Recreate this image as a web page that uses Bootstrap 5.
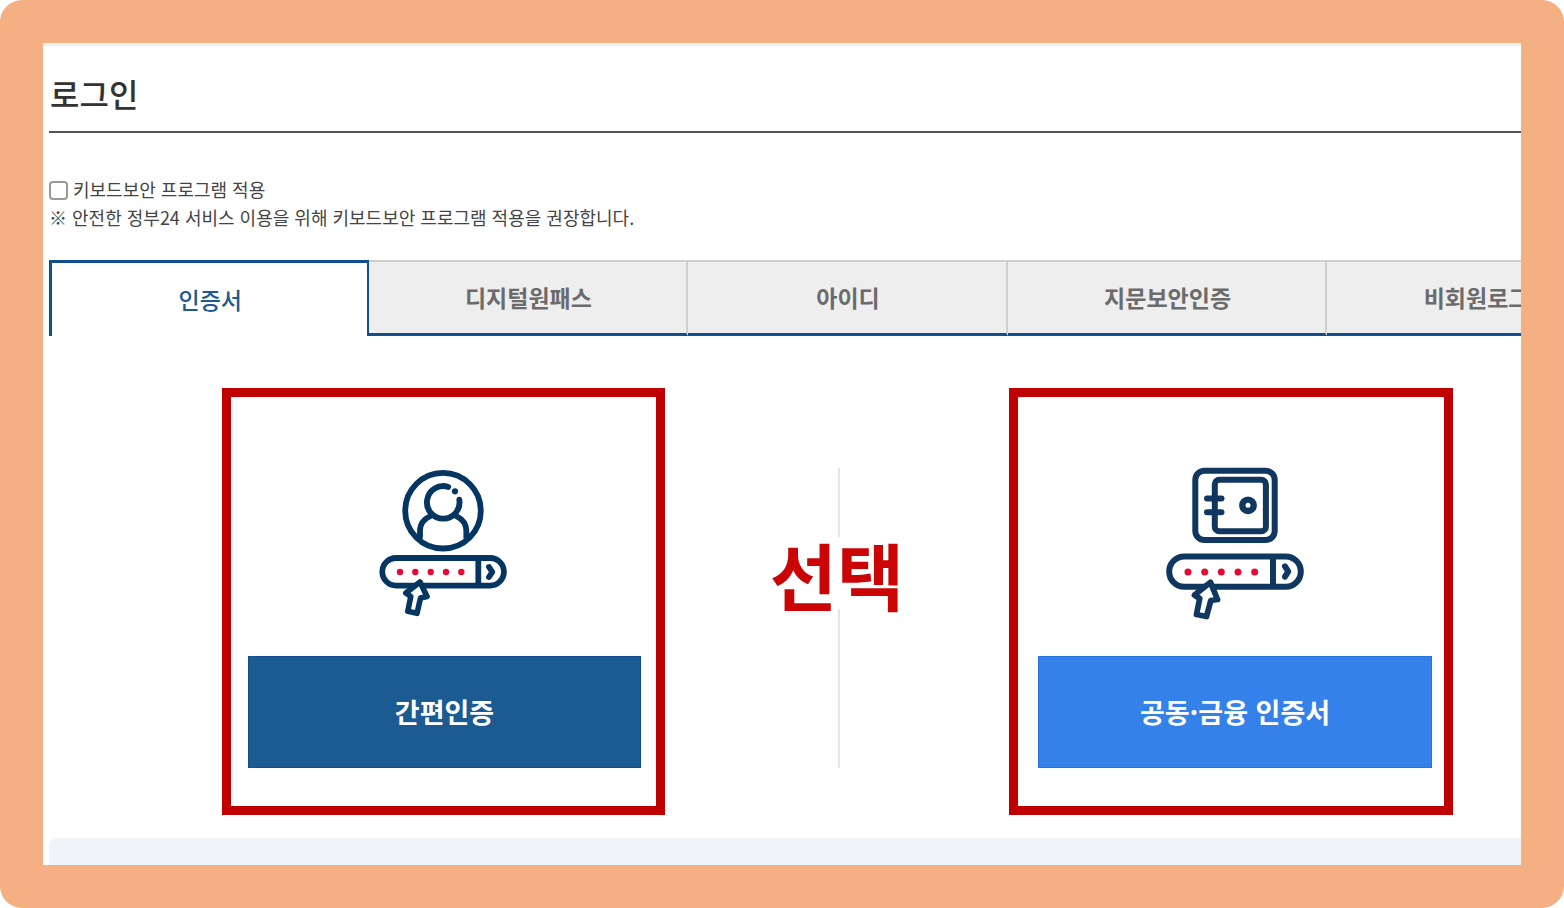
<!DOCTYPE html>
<html lang="ko">
<head>
<meta charset="utf-8">
<meta name="viewport" content="width=device-width, initial-scale=1">
<title>로그인</title>
<link href="https://cdn.jsdelivr.net/npm/bootstrap@5.3.0/dist/css/bootstrap.min.css" rel="stylesheet">
<style>
  body { font-family: "Noto Sans CJK KR", sans-serif; color: #333; background: #fff; }
  .frame { background: #f4b083; border-radius: 22px; padding: 43px; }
  .sheet { background: #fff; border-top: 3px solid #efefef; padding-left: 6px; }
  .page-title { font-size: 32px; line-height: 40px; font-weight: 500; padding: 27px 1px 18px; border-bottom: 2px solid #555; }
  .notice { font-size: 18px; line-height: 28px; color: #444; padding: 42px 0 29px; }
  .notice .form-check-input { width: 19px; height: 19px; margin: 3px 5px 0 0; border: 2px solid #999; border-radius: 4px; }
  /* The tab strip runs past the right edge and is cut off by the sheet */
  .wide { width: calc(100% + 126px); }
  .auth-tabs { border: 0; }
  .auth-tabs .nav-item { flex: 1 1 0; }
  .auth-tabs .nav-link { width: 100%; height: 76px; margin: 0; padding: 8px 14px 10px 16px; border-radius: 0; font-size: 23px; line-height: 34px; font-weight: 700; color: #6b6b6b; background: #eee;
    border: 0 solid #cfcfcf; border-top-width: 2px; border-right-width: 2px; border-bottom: 3px solid #0f4f8b; }
  .auth-tabs .nav-link.active { color: #1c5a92; background: #fff; font-weight: 500; border: 3px solid #0f4f8b; border-right-width: 2px; border-bottom: 0; }
  .choices { padding: 52px 21px 23px 0; }
  .choice { width: 443px; border: 9px solid #c00000; padding: 58px 15px 38px 17px; }
  .choice.cert { width: 444px; padding-left: 20px; padding-right: 12px; }
  .choice svg { width: 160px; height: 175px; margin-bottom: 26px; }
  .choice .btn { height: 112px; border-radius: 0; font-size: 27px; font-weight: 700; color: #fff; background: #1c5a92; border: 1px solid #0f4f8b; }
  .choice.cert .btn { background: #3482e9; border-color: #2474e0; }
  .middle { width: 344px; padding-top: 80px; justify-items: center; align-items: start; }
  .middle > * { grid-area: 1 / 1; }
  .rule { width: 2px; height: 300px; background: #e5e5e5; }
  .pick { font-size: 73px; line-height: 80px; margin-top: 65px; font-weight: 700; color: #cb0505; background: linear-gradient(#fff, #fff) center / 12px 72px no-repeat; }
  .panel { min-height: 27px; background: #eff4f9; border-top-left-radius: 8px; }
</style>
</head>
<body>
<div class="frame min-vh-100 d-flex flex-column">
  <main class="sheet flex-grow-1 d-flex flex-column overflow-hidden">
    <h1 class="page-title m-0">로그인</h1>

    <div class="notice">
      <div class="d-flex align-items-center">
        <input class="form-check-input" type="checkbox" id="keyboardSecurity">
        <label for="keyboardSecurity">키보드보안 프로그램 적용</label>
      </div>
      <p class="m-0">※ 안전한 정부24 서비스 이용을 위해 키보드보안 프로그램 적용을 권장합니다.</p>
    </div>

    <div class="wide">
      <ul class="nav nav-tabs auth-tabs flex-nowrap" role="tablist">
        <li class="nav-item" role="presentation"><button type="button" class="nav-link active" role="tab" aria-selected="true">인증서</button></li>
        <li class="nav-item" role="presentation"><button type="button" class="nav-link" role="tab" aria-selected="false">디지털원패스</button></li>
        <li class="nav-item" role="presentation"><button type="button" class="nav-link" role="tab" aria-selected="false">아이디</button></li>
        <li class="nav-item" role="presentation"><button type="button" class="nav-link" role="tab" aria-selected="false">지문보안인증</button></li>
        <li class="nav-item" role="presentation"><button type="button" class="nav-link" role="tab" aria-selected="false">비회원로그인</button></li>
      </ul>

      <div class="choices d-flex justify-content-center">
        <section class="choice d-flex flex-column align-items-center">
          <svg viewBox="365 455 160 175" fill="none" stroke="#053561" stroke-width="5.8" stroke-linecap="round" stroke-linejoin="round" aria-hidden="true">
            <circle cx="443" cy="510.7" r="37.8"/>
            <path d="M448.3 486.9A16.3 16.3 0 1 0 459.3 499.7"/>
            <path d="M420 537V530Q420.5 521 429.500 516.500M466.300 537V530Q465.800 521 457 516.500"/>
            <circle cx="455" cy="491.300" r="3.100" fill="#053561" stroke="none"/>
            <rect x="382.300" y="558" width="121.600" height="27.600" rx="13.800"/>
            <path d="M478.300 558V585.600" stroke-linecap="butt"/>
            <path d="M489 567L492.300 572L489 577"/>
            <g fill="#e60a32" stroke="none"><circle cx="400" cy="572" r="3.200"/><circle cx="415.300" cy="572" r="3.200"/><circle cx="430.700" cy="572" r="3.200"/><circle cx="446" cy="572" r="3.200"/><circle cx="461.300" cy="572" r="3.200"/></g>
            <path d="M420 582L427 596.500L420.500 598L417 613.300L407.800 611.300L410.800 596.500L405.800 593Z" fill="#fff" stroke-width="5.600"/>
          </svg>
          <button type="button" class="btn w-100">간편인증</button>
        </section>

        <div class="middle d-grid">
          <div class="rule ms-1"></div>
          <span class="pick text-nowrap">선택</span>
        </div>

        <section class="choice cert d-flex flex-column align-items-center">
          <svg viewBox="1155 455 160 175" fill="none" stroke="#10375f" stroke-width="6" stroke-linecap="round" stroke-linejoin="round" aria-hidden="true">
            <rect x="1195.300" y="470.700" width="79.400" height="69.400" rx="9"/>
            <rect x="1214.800" y="479.800" width="51.100" height="51.400" rx="4.500"/>
            <path d="M1207 498.500H1221.500M1207 512.200H1221.500"/>
            <circle cx="1248" cy="505.300" r="5.700" stroke-width="6.400"/>
            <rect x="1169.200" y="556.500" width="131.600" height="30.300" rx="15.100"/>
            <path d="M1273 557V587" stroke-linecap="butt"/>
            <path d="M1285 566.300L1288.300 571.500L1285 576.700"/>
            <g fill="#e60a32" stroke="none"><circle cx="1188" cy="572" r="3.500"/><circle cx="1204.700" cy="572" r="3.500"/><circle cx="1221.300" cy="572" r="3.500"/><circle cx="1238" cy="572" r="3.500"/><circle cx="1254.700" cy="572" r="3.500"/></g>
            <path d="M1210.500 582.300L1217.500 599.500L1210.800 600.500L1206.500 616.500L1196.500 614.500L1199.700 598.500L1194.500 595Z" fill="#fff" stroke-width="5.800"/>
          </svg>
          <button type="button" class="btn w-100">공동·금융 인증서</button>
        </section>
      </div>
    </div>

    <div class="panel flex-grow-1"></div>
  </main>
</div>
<script src="https://cdn.jsdelivr.net/npm/bootstrap@5.3.0/dist/js/bootstrap.bundle.min.js"></script>
</body>
</html>
